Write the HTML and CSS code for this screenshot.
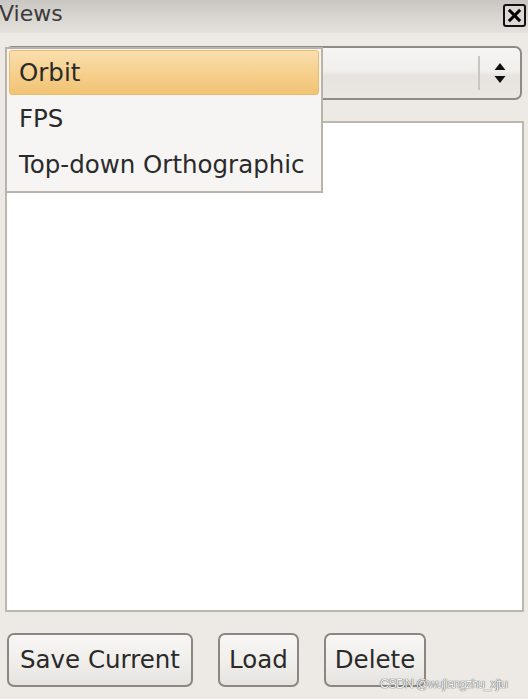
FILE: index.html
```html
<!DOCTYPE html>
<html>
<head>
<meta charset="utf-8">
<link rel="stylesheet" href="styles.css">
</head>
<body>
<div class="panel">
  <div class="titlebar">
    <span class="title">Views</span>
    <span class="close">
      <svg width="18" height="18" viewBox="0 0 18 18"><path d="M3.5 3.5 L14.5 14.5 M14.5 3.5 L3.5 14.5" stroke="#000" stroke-width="3.6" stroke-linecap="square"/></svg>
    </span>
  </div>
  <div class="content">
    <div class="combo">
      <div class="combo-field"></div>
      <div class="combo-sep"></div>
      <div class="combo-arrows">
        <svg width="14" height="24" viewBox="0 0 14 24"><path d="M7 2 L12.5 9 L1.5 9 Z M1.5 15 L12.5 15 L7 22 Z" fill="#111"/></svg>
      </div>
    </div>
    <div class="listbox"></div>
    <div class="buttons">
      <button class="btn btn-save">Save Current</button>
      <button class="btn btn-load">Load</button>
      <button class="btn btn-delete">Delete</button>
    </div>
    <div class="popup">
      <div class="item selected">Orbit</div>
      <div class="item">FPS</div>
      <div class="item">Top-down Orthographic</div>
    </div>
    <div class="watermark">CSDN @wujiangzhu_xjtu</div>
  </div>
</div>
</body>
</html>
```
FILE: styles.css
```css
html, body {
  margin: 0;
  padding: 0;
  width: 528px;
  height: 699px;
  overflow: hidden;
  background: #edeae6;
  font-family: "DejaVu Sans", Verdana, sans-serif;
  color: #2a2a2a;
}
.panel {
  width: 528px;
  height: 699px;
  display: flex;
  flex-direction: column;
}
.titlebar {
  height: 33px;
  flex: none;
  display: flex;
  align-items: center;
  justify-content: space-between;
  background: linear-gradient(to bottom, #c9c6c2 0%, #d8d5d1 50%, #e4e1dd 100%);
  padding: 0 2px 0 0;
}
.title {
  font-size: 22px;
  color: #3a3a3a;
  margin-top: -6px;
  margin-left: -1px;
}
.close {
  width: 19px;
  height: 19px;
  border: 2px solid #111;
  border-radius: 3px;
  display: flex;
  align-items: center;
  justify-content: center;
  margin-top: -3px;
  background: #dcd9d5;
}
.close svg { width: 15px; height: 15px; }
.content {
  position: relative;
  flex: 1;
  padding: 13px 0 0 5px;
  display: flex;
  flex-direction: column;
}
.combo {
  width: 513px;
  height: 50px;
  border: 2px solid #8e8a84;
  border-radius: 7px;
  background: linear-gradient(to bottom, #f6f5f3 0%, #f1efec 45%, #e7e4e0 55%, #eae7e3 100%);
  display: flex;
  align-items: stretch;
}
.combo-field { flex: 1; }
.combo-sep {
  width: 2px;
  margin: 8px 0;
  background: #c9c5bf;
}
.combo-arrows {
  width: 40px;
  display: flex;
  align-items: center;
  justify-content: center;
}
.listbox {
  margin-top: 21px;
  width: 515px;
  height: 487px;
  background: #ffffff;
  border: 2px solid #bdb6ad;
}
.buttons {
  margin-top: 21px;
  margin-left: 2px;
  display: flex;
  gap: 25px;
}
.btn {
  height: 54px;
  border: 2px solid #8b867f;
  border-radius: 7px;
  background: linear-gradient(to bottom, #f7f6f4 0%, #f1efec 50%, #e6e3df 100%);
  font-family: "DejaVu Sans", Verdana, sans-serif;
  font-size: 24.5px;
  color: #2a2a2a;
  padding: 0 0 2px 0;
  box-sizing: border-box;
}
.btn-save { width: 186px; }
.btn-load { width: 81px; }
.btn-delete { width: 102px; }
.popup {
  position: absolute;
  left: 5px;
  top: 14px;
  width: 310px;
  height: 140px;
  background: #f6f5f3;
  border: 2px solid #bab3aa;
  padding: 1px 2px;
  display: flex;
  flex-direction: column;
}
.item {
  height: 46px;
  display: flex;
  align-items: center;
  padding-left: 10px;
  font-size: 24.5px;
  color: #2a2a2a;
  flex: none;
  box-sizing: border-box;
  white-space: nowrap;
}
.item.selected {
  height: 45px;
  background: linear-gradient(to bottom, #fadfae 0%, #f6d08e 50%, #f1c374 100%);
  border: 1px solid #e9bd6f;
  border-radius: 3px;
  padding-left: 9px;
}
.watermark {
  position: absolute;
  right: 21px;
  bottom: 8px;
  font-family: "Liberation Sans", Arial, sans-serif;
  font-size: 13px;
  color: #f4f4f4;
  text-shadow: 0 0 1px #555, 0 0 1px #555;
  letter-spacing: -0.9px;
}
```
